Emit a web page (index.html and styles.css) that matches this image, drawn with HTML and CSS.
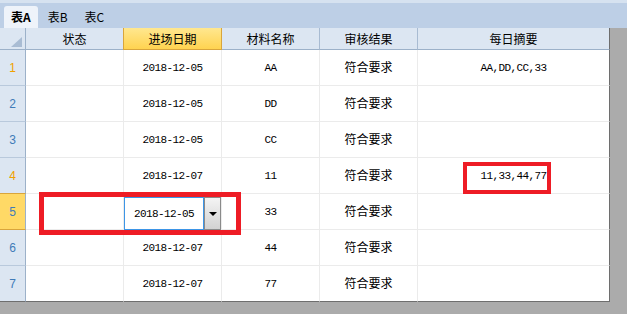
FILE: index.html
```html
<!DOCTYPE html>
<html lang="zh">
<head>
  <meta charset="UTF-8">
  <title>表A</title>
  <link rel="stylesheet" href="styles.css">
</head>
<body>

  <!-- Tabs sus -->
  <div class="tabs">
    <div class="tab active">表A</div>
    <div class="tab">表B</div>
    <div class="tab">表C</div>
  </div>

  <div class="sheet">
    <div class="grid">
      <div class="hdr corner"><span class="tri"></span></div>
      <div class="hdr">状态</div>
      <div class="hdr sel">进场日期</div>
      <div class="hdr">材料名称</div>
      <div class="hdr">审核结果</div>
      <div class="hdr last">每日摘要</div>

      <div class="num odd">1</div>
      <div class="cell"></div>
      <div class="cell mono">2018-12-05</div>
      <div class="cell mono">AA</div>
      <div class="cell">符合要求</div>
      <div class="cell mono last">AA,DD,CC,33</div>

      <div class="num">2</div>
      <div class="cell"></div>
      <div class="cell mono">2018-12-05</div>
      <div class="cell mono">DD</div>
      <div class="cell">符合要求</div>
      <div class="cell last"></div>

      <div class="num">3</div>
      <div class="cell"></div>
      <div class="cell mono">2018-12-05</div>
      <div class="cell mono">CC</div>
      <div class="cell">符合要求</div>
      <div class="cell last"></div>

      <div class="num odd">4</div>
      <div class="cell"></div>
      <div class="cell mono">2018-12-07</div>
      <div class="cell mono">11</div>
      <div class="cell">符合要求</div>
      <div class="cell mono last">11,33,44,77</div>

      <div class="num cur">5</div>
      <div class="cell"></div>
      <div class="cell edit-cell">
        <div class="editor">2018-12-05</div>
        <div class="drop"><span class="arrow"></span></div>
      </div>
      <div class="cell mono">33</div>
      <div class="cell">符合要求</div>
      <div class="cell last"></div>

      <div class="num">6</div>
      <div class="cell"></div>
      <div class="cell mono">2018-12-07</div>
      <div class="cell mono">44</div>
      <div class="cell">符合要求</div>
      <div class="cell last"></div>

      <div class="num bottom">7</div>
      <div class="cell bottom"></div>
      <div class="cell mono bottom">2018-12-07</div>
      <div class="cell mono bottom">77</div>
      <div class="cell bottom">符合要求</div>
      <div class="cell last bottom"></div>

      <!-- marcaje rosii -->
      <div class="mark mark-edit"></div>
      <div class="mark mark-sum"></div>
    </div>
  </div>

</body>
</html>
```

FILE: styles.css
```css
body {
  margin: 0;
  padding: 0;
  background-color: #ababab;
  font-family: "Noto Sans CJK SC", "Liberation Sans", sans-serif;
  font-size: 12px;
  color: #000000;
  width: 627px;
  height: 314px;
  overflow: hidden;
}

.tabs {
  height: 25px;
  background-color: #bdcfe6;
  border-top: 3px solid #d6e2f0;
  display: flex;
  align-items: flex-end;
  padding-left: 4px;
}

.tab {
  height: 22px;
  line-height: 22px;
  padding: 0 7px;
  margin-right: 3px;
  color: #000;
}

.tab.active {
  background-color: #eef3fa;
  border-radius: 3px 3px 0 0;
  font-weight: bold;
}

.sheet {
  display: flex;
}

.grid {
  position: relative;
  display: grid;
  grid-template-columns: 26px 98px 98px 98px 98px 192px;
  grid-template-rows: 22px repeat(7, 36px);
  background-color: #ffffff;
  width: 610px;
}

.hdr {
  box-sizing: border-box;
  background-color: #dce6f2;
  border-right: 1px solid #a8bbd2;
  border-bottom: 1px solid #9cb1c9;
  display: flex;
  align-items: center;
  justify-content: center;
  font-size: 12px;
}

.hdr.sel {
  background: linear-gradient(#ffe78f, #ffd350);
  border-right: 1px solid #d9a53b;
  border-bottom: 1px solid #d9a53b;
  border-left: 1px solid #d9a53b;
  margin-left: -1px;
}

.hdr.last {
  border-right: 1px solid #6e6e6e;
}

.corner {
  position: relative;
  border-right: 1px solid #9cb1c9;
}

.tri {
  position: absolute;
  right: 3px;
  bottom: 2px;
  width: 0;
  height: 0;
  border-left: 11px solid transparent;
  border-bottom: 10px solid #a9bcd3;
}

.num {
  box-sizing: border-box;
  background-color: #dce6f2;
  border-right: 1px solid #9cb1c9;
  border-bottom: 1px solid #b9c9dc;
  display: flex;
  align-items: center;
  justify-content: center;
  font-family: "Liberation Sans", sans-serif;
  font-size: 12px;
  color: #3f7bb8;
}

.num.odd {
  color: #f0a000;
}

.num.cur {
  background-color: #ffd966;
  border-bottom: 1px solid #d9a53b;
  border-top: 1px solid #d9a53b;
  margin-top: -1px;
}

.cell {
  box-sizing: border-box;
  border-right: 1px solid #ebebeb;
  border-bottom: 1px solid #ebebeb;
  display: flex;
  align-items: center;
  justify-content: center;
  padding-bottom: 3px;
}

.cell.last {
  border-right: 1px solid #6e6e6e;
}

.bottom {
  border-bottom: 1px solid #6e6e6e;
}

.mono {
  font-family: "Liberation Mono", monospace;
  font-size: 11px;
  letter-spacing: -0.6px;
  padding-bottom: 0;
  padding-top: 1px;
}

.edit-cell {
  align-items: flex-end;
  justify-content: flex-start;
  padding: 0;
  border-bottom: none;
}

.editor {
  box-sizing: border-box;
  width: 80px;
  height: 33px;
  border: 1px solid #3d95e6;
  display: flex;
  align-items: center;
  justify-content: center;
  font-family: "Liberation Mono", monospace;
  font-size: 11px;
  letter-spacing: -0.6px;
}

.drop {
  box-sizing: border-box;
  width: 17px;
  height: 33px;
  background: linear-gradient(#f4f4f4, #d2d2d2);
  border: 1px solid #8a8a8a;
  display: flex;
  align-items: center;
  justify-content: center;
}

.arrow {
  width: 0;
  height: 0;
  border-left: 4px solid transparent;
  border-right: 4px solid transparent;
  border-top: 4px solid #000;
}

.mark {
  position: absolute;
  box-sizing: border-box;
  border: 5px solid #ee1c25;
}

.mark-edit {
  left: 39px;
  top: 164px;
  width: 202px;
  height: 43px;
}

.mark-sum {
  left: 463px;
  top: 134px;
  width: 88px;
  height: 32px;
  border-width: 4px;
}
```
